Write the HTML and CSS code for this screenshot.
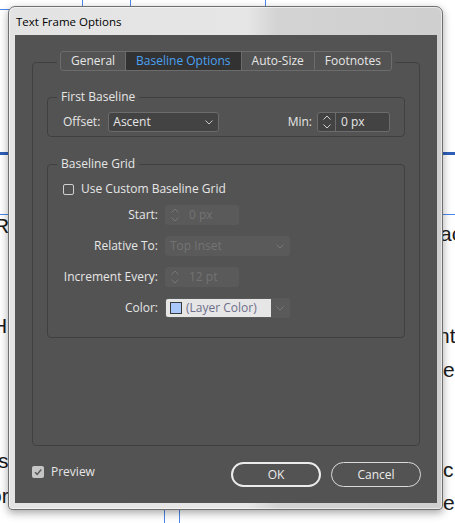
FILE: index.html
```html
<!DOCTYPE html>
<html lang="en">
<head>
<meta charset="utf-8">
<title>Text Frame Options</title>
<link rel="stylesheet" href="styles.css">
</head>
<body>
<div class="desk">
  <div class="gv gv1"></div>
  <div class="gv gv2"></div>
  <div class="gv gv3"></div>
  <div class="gv gv4"></div>
  <div class="gv gv5"></div>
  <div class="gh gh1"></div>
  <div class="gh gh2"></div>
  <div class="gh gh3"></div>
  <span class="frag f1">R</span>
  <span class="frag f2">H</span>
  <span class="frag f3">s</span>
  <span class="frag f4">or</span>
  <span class="frag f5">ac</span>
  <span class="frag f6">nt</span>
  <span class="frag f7">e</span>
  <span class="frag f8">c</span>
  <span class="frag f9">e</span>
</div>

<div class="win">
  <div class="titlebar">Text Frame Options</div>
  <div class="client">
    <div class="tabs">
      <div class="strip">
        <div class="tab">General</div>
        <div class="tab active">Baseline Options</div>
        <div class="tab">Auto-Size</div>
        <div class="tab">Footnotes</div>
      </div>
    </div>

    <div class="panel">
      <fieldset class="group first">
        <legend>First Baseline</legend>
        <div class="row">
          <span class="lbl">Offset:</span>
          <div class="select offset">
            <span>Ascent</span>
            <svg class="chev" viewBox="0 0 8 5"><path d="M0.5 0.5 L4 4 L7.5 0.5"/></svg>
          </div>
          <span class="lbl min">Min:</span>
          <div class="spin w-min">
            <div class="arr">
              <svg class="updown" viewBox="0 0 8 14"><path d="M0.5 4.5 L4 1 L7.5 4.5 M0.5 9.5 L4 13 L7.5 9.5"/></svg>
            </div>
            <span class="val">0 px</span>
          </div>
        </div>
      </fieldset>

      <fieldset class="group grid">
        <legend>Baseline Grid</legend>
        <div class="check">
          <span class="box"></span>
          <span>Use Custom Baseline Grid</span>
        </div>
        <div class="form">
          <span class="lbl">Start:</span>
          <div class="spin dis w-short">
            <div class="arr">
              <svg class="updown" viewBox="0 0 8 14"><path d="M0.5 4.5 L4 1 L7.5 4.5 M0.5 9.5 L4 13 L7.5 9.5"/></svg>
            </div>
            <span class="val">0 px</span>
          </div>

          <span class="lbl">Relative To:</span>
          <div class="select dis w-long">
            <span>Top Inset</span>
            <svg class="chev" viewBox="0 0 8 5"><path d="M0.5 0.5 L4 4 L7.5 0.5"/></svg>
          </div>

          <span class="lbl">Increment Every:</span>
          <div class="spin dis w-short">
            <div class="arr">
              <svg class="updown" viewBox="0 0 8 14"><path d="M0.5 4.5 L4 1 L7.5 4.5 M0.5 9.5 L4 13 L7.5 9.5"/></svg>
            </div>
            <span class="val">12 pt</span>
          </div>

          <span class="lbl">Color:</span>
          <div class="colorsel w-long">
            <div class="colorval">
              <span class="swatch"></span>
              <span>(Layer Color)</span>
            </div>
            <div class="colorarr">
              <svg class="chev" viewBox="0 0 8 5"><path d="M0.5 0.5 L4 4 L7.5 0.5"/></svg>
            </div>
          </div>
        </div>
      </fieldset>
    </div>

    <div class="footer">
      <div class="check preview">
        <span class="box checked">
          <svg viewBox="0 0 12 12"><path d="M3 6.2 L5.2 8.4 L9.2 3.6"/></svg>
        </span>
        <span>Preview</span>
      </div>
      <div class="buttons">
        <button class="btn ok">OK</button>
        <button class="btn">Cancel</button>
      </div>
    </div>
  </div>
</div>
</body>
</html>
```
FILE: styles.css
```css
* { box-sizing: border-box; }
html, body { margin: 0; padding: 0; }
body {
  width: 455px;
  height: 523px;
  overflow: hidden;
  background: #ffffff;
  position: relative;
  font-family: "Open Sans", "Noto Sans", sans-serif;
}

/* background document canvas */
.desk { position: absolute; left: 0; top: 0; width: 455px; height: 523px; }
.gv { position: absolute; width: 1px; background: #4a86e8; }
.gv1 { left: 82px; top: 0; height: 10px; }
.gv2 { left: 130px; top: 0; height: 10px; }
.gv3 { left: 265px; top: 0; height: 10px; }
.gv4 { left: 164px; top: 500px; height: 23px; }
.gv5 { left: 179px; top: 500px; height: 23px; }
.gh { position: absolute; left: 0; width: 455px; height: 1px; background: #4a86e8; }
.gh1 { top: 9px; width: 10px; }
.gh2 { top: 152px; height: 3px; background: #2f5fb8; }
.gh3 { top: 214px; }
.frag {
  position: absolute;
  font-family: "Liberation Sans", Arial, sans-serif;
  font-size: 21px;
  line-height: 21px;
  color: #1a1a1a;
  white-space: nowrap;
}
.f1 { left: -6px; top: 215px; }
.f2 { left: -8px; top: 315px; }
.f3 { left: -2px; top: 450px; }
.f4 { left: -10px; top: 485px; }
.f5 { left: 440px; top: 223px; }
.f6 { left: 438px; top: 325px; }
.f7 { left: 443px; top: 359px; }
.f8 { left: 443px; top: 459px; }
.f9 { left: 443px; top: 492px; }

/* dialog window */
.win {
  position: absolute;
  left: 8px;
  top: 6px;
  width: 435px;
  height: 504px;
  display: flex;
  flex-direction: column;
  border: 1px solid #6f6f6f;
  border-radius: 7px 7px 4px 4px;
  background: linear-gradient(90deg, #e3e3e3 0%, #e6e6e6 55%, #d3d3d3 62%, #cfcfcf 100%);
  box-shadow: 0 3px 8px rgba(0, 0, 0, 0.35), inset 0 0 0 1px rgba(255, 255, 255, 0.55);
}
.titlebar {
  height: 28px;
  flex: none;
  padding-left: 7px;
  display: flex;
  align-items: center;
  font-size: 11.5px;
  color: #000;
}
.client {
  flex: 1;
  margin: 0 5px 6px 6px;
  background: #535353;
  padding: 16px 17px 0;
  display: flex;
  flex-direction: column;
  color: #e6e6e6;
  font-size: 12px;
  line-height: 16px;
}

/* tabs */
.tabs {
  align-self: center;
  display: flex;
  padding: 0 3px;
  background: #535353;
  position: relative;
  z-index: 1;
}
.strip {
  display: flex;
  border: 1px solid #6c6c6c;
  border-radius: 3px;
  overflow: hidden;
}
.tab {
  height: 18px;
  line-height: 18px;
  padding: 0 10px;
  border-left: 1px solid #6c6c6c;
  color: #e6e6e6;
}
.tab:first-child { border-left: 0; }
.tab.active { background: #323232; color: #4ba1f2; }

/* panel & groups */
.panel {
  margin-top: -9px;
  height: 384px;
  border: 1px solid #404040;
  border-radius: 4px;
  padding: 26px 14px 0;
}
.group {
  margin: 0;
  border: 1px solid #404040;
  border-radius: 4px;
  padding: 7px 14px 4px 15px;
  min-width: 0;
}
.group legend {
  padding: 0 4px;
  margin-left: -6px;
  line-height: 16px;
}
.grid {
  margin-top: 19px;
  padding: 9px 14px 19px 15px;
}

.row { display: flex; align-items: center; height: 20px; }
.row .lbl { margin-right: 8px; }
.row .min { margin-left: auto; margin-right: 5px; }

.select {
  display: flex;
  align-items: center;
  justify-content: space-between;
  height: 20px;
  border: 1px solid #6c6c6c;
  border-radius: 3px;
  background: #434343;
  padding: 0 5px 0 4px;
}
.offset { width: 111px; }
.chev { width: 8px; height: 5px; display: block; }
.chev path { fill: none; stroke: #c8c8c8; stroke-width: 1; }

.spin {
  display: flex;
  height: 20px;
  border: 1px solid #6c6c6c;
  border-radius: 3px;
  background: #434343;
}
.spin .arr {
  width: 18px;
  border-right: 1px solid #6c6c6c;
  display: flex;
  align-items: center;
  justify-content: center;
}
.spin .val { padding-left: 5px; display: flex; align-items: center; }
.updown { width: 8px; height: 14px; display: block; }
.updown path { fill: none; stroke: #cfcfcf; stroke-width: 1; }
.w-min { width: 73px; }
.w-short { width: 74px; }
.w-long { width: 125px; }

.dis { border-color: transparent; background: #5a5a5a; color: #737373; }
.spin.dis .arr { border-right-color: transparent; }
.dis .updown path, .colorarr .chev path, .dis .chev path { stroke: #777; }

.colorsel {
  display: flex;
  height: 20px;
  border: 1px solid transparent;
  border-radius: 3px;
  background: #5a5a5a;
  overflow: hidden;
}
.colorval {
  width: 105px;
  background: #e6e6e6;
  display: flex;
  align-items: center;
  padding-left: 4px;
  color: #6e6e8c;
}
.swatch {
  width: 12px;
  height: 12px;
  border: 1px solid #3a3a3a;
  background: #a9c9fb;
  margin-right: 4px;
}
.colorarr { flex: 1; display: flex; align-items: center; justify-content: center; }

.form {
  display: grid;
  grid-template-columns: 95px auto;
  column-gap: 7px;
  row-gap: 11px;
  margin-top: 8px;
  align-items: center;
  justify-items: start;
}
.form .lbl { justify-self: end; }

.check { display: flex; align-items: center; height: 16px; }
.check .box {
  width: 11px;
  height: 11px;
  border: 1px solid #d0d0d0;
  border-radius: 2px;
  margin-right: 7px;
}
.check .box.checked {
  width: 12px;
  height: 12px;
  border: 0;
  background: #c6c6c6;
}
.check .box.checked svg { width: 12px; height: 12px; display: block; }
.check .box.checked path { fill: none; stroke: #5d5d5d; stroke-width: 1.6; }

/* footer */
.footer {
  display: flex;
  align-items: center;
  justify-content: space-between;
  margin-top: 16px;
}
.preview { margin-bottom: 5px; }
.buttons { display: flex; gap: 10px; margin-right: -1px; }
.btn {
  width: 90px;
  height: 25px;
  border-radius: 13px;
  border: 1px solid #dadada;
  background: transparent;
  color: #ececec;
  font: 12px/1 "Open Sans", "Noto Sans", sans-serif;
  padding: 0;
}
.btn.ok { border: 2px solid #ececec; }
```
